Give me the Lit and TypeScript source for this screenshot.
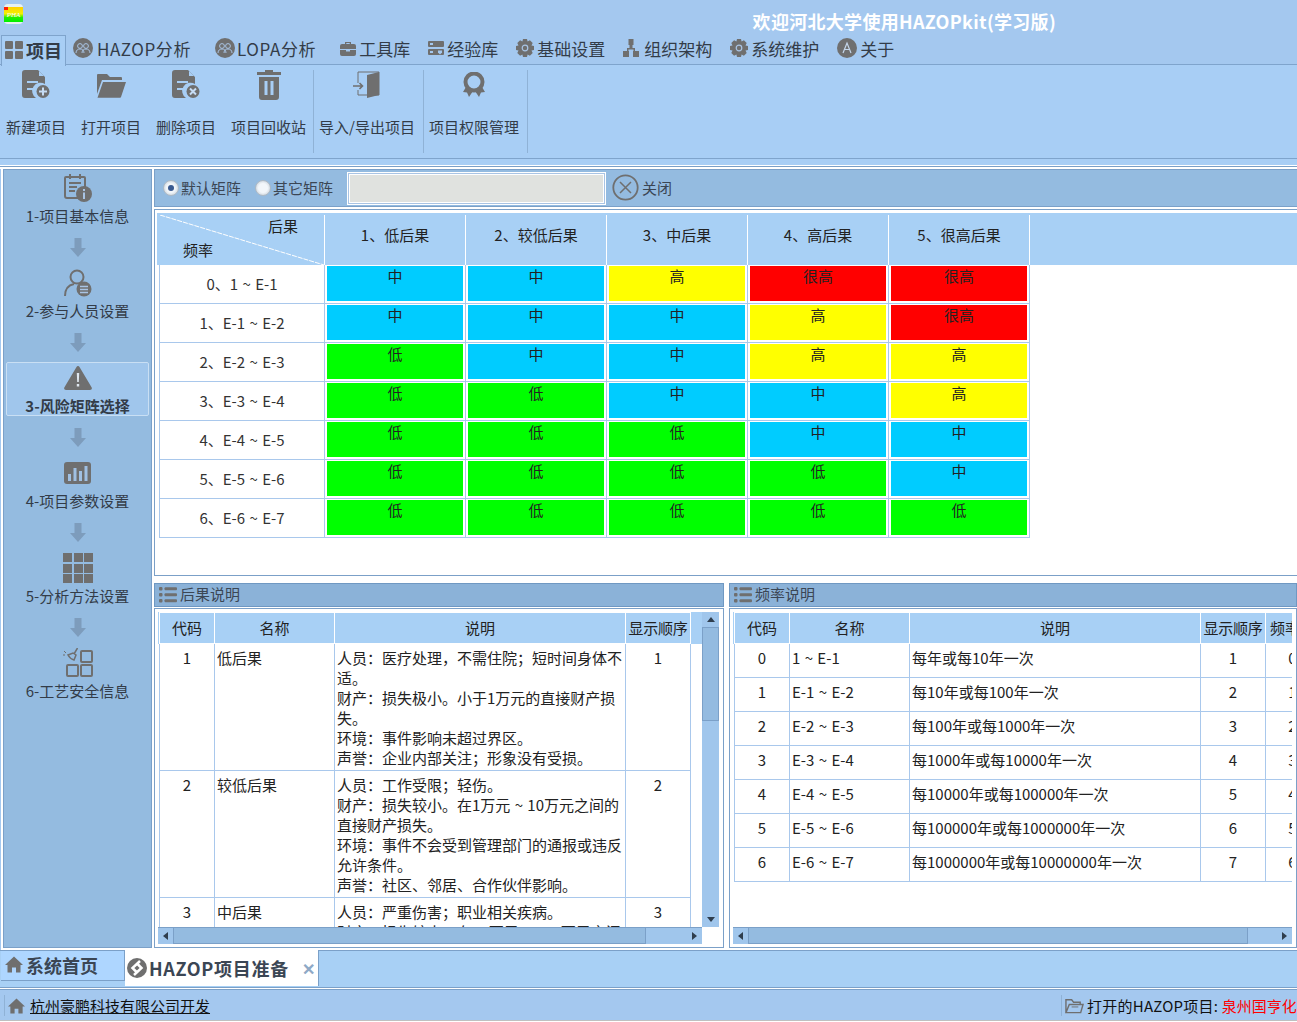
import { LitElement, html, css } from "lit";
import { customElement } from "lit/decorators.js";

const G = "#6f6f6f";
const icons: Record<string, any> = {
  grid: html`<svg width="20" height="20" viewBox="0 0 20 20"><g fill="${G}"><rect x="1" y="1" width="8" height="8" rx="1"/><rect x="11" y="1" width="8" height="8" rx="1"/><rect x="1" y="11" width="8" height="8" rx="1"/><rect x="11" y="11" width="8" height="8" rx="1"/></g></svg>`,
  people: html`<svg width="20" height="20" viewBox="0 0 20 20"><circle cx="10" cy="10" r="10" fill="${G}"/><g fill="none" stroke="#a9c4e4" stroke-width="1"><circle cx="7" cy="8" r="2.4"/><circle cx="13" cy="8" r="2.4"/><path d="M3 15c0-3 2-4 4-4s4 1 4 4M9 15c0-3 2-4 4-4s4 1 4 4"/></g></svg>`,
  case: html`<svg width="16" height="15" viewBox="0 0 16 15"><path fill="${G}" d="M5 1h6v2h3a2 2 0 0 1 2 2v3H0V5a2 2 0 0 1 2-2h3zm1.300 1v1h3.400V2zM0 9h6v1.500h4V9h6v4a2 2 0 0 1-2 2H2a2 2 0 0 1-2-2z"/></svg>`,
  server: html`<svg width="16" height="16" viewBox="0 0 16 16"><g fill="${G}"><rect y="1" width="16" height="6" rx="1"/><rect y="9" width="16" height="6" rx="1"/></g><g fill="#a4c8ef"><rect x="2" y="3" width="3" height="2"/><rect x="2" y="11" width="3" height="2"/></g><path fill="#a4c8ef" d="M10 10.500h4v2l-2 2-2-2z"/></svg>`,
  gear: html`<svg width="18" height="18" viewBox="0 0 18 18"><path fill="${G}" d="M7 0h4l.6 2.500 2.300-1.200 2.800 2.800-1.200 2.300L18 7v4l-2.500.6 1.200 2.300-2.800 2.800-2.300-1.200L11 18H7l-.6-2.500-2.300 1.200-2.800-2.800 1.200-2.300L0 11V7l2.500-.6-1.200-2.300 2.800-2.800 2.300 1.200z"/><circle cx="9" cy="9" r="2.800" fill="none" stroke="#a9c4e4" stroke-width="1.200"/></svg>`,
  org: html`<svg width="16" height="18" viewBox="0 0 16 18" class="org"><path fill="${G}" d="M5.500 0h5v6h-1v3h2.500v3H16v6h-6v-6h.5v-1.500h-5V12H6v6H0v-6h4V9h2.500V6h-1z"/></svg>`,
  about: html`<svg width="20" height="20" viewBox="0 0 20 20"><circle cx="10" cy="10" r="10" fill="${G}"/><path d="M6 15l4-10 4 10M7.500 11.500h5" fill="none" stroke="#c4d6ea" stroke-width="1.200"/></svg>`,
  docAdd: html`<svg width="28" height="30" viewBox="0 0 28 30"><path fill="${G}" d="M3 0h13l7 7v7a8 8 0 0 0-9 14H3a3 3 0 0 1-3-3V3a3 3 0 0 1 3-3z"/><path fill="#a8cef5" d="M17 1l5 5h-5zM5 11h11v2H5zM5 18h8v2H5z"/><circle cx="21" cy="21.500" r="6.500" fill="${G}"/><path d="M21 17.500v8M17 21.500h8" stroke="#c6dcf4" stroke-width="2"/></svg>`,
  docDel: html`<svg width="28" height="30" viewBox="0 0 28 30"><path fill="${G}" d="M3 0h13l7 7v7a8 8 0 0 0-9 14H3a3 3 0 0 1-3-3V3a3 3 0 0 1 3-3z"/><path fill="#a8cef5" d="M17 1l5 5h-5zM5 11h11v2H5zM5 18h8v2H5z"/><circle cx="21" cy="21.500" r="6.500" fill="${G}"/><path d="M18 18.500l6 6M24 18.500l-6 6" stroke="#c6dcf4" stroke-width="2"/></svg>`,
  folder: html`<svg width="30" height="26" viewBox="0 0 30 26"><path fill="${G}" d="M1 22V3a1 1 0 0 1 1-1h9l3 3h11a1 1 0 0 1 1 1v2H6z"/><path fill="${G}" d="M7 10h23l-5 15a1 1 0 0 1-1 .8H1.500z"/></svg>`,
  trash: html`<svg width="24" height="30" viewBox="0 0 24 30"><path fill="${G}" d="M8 0h8v2h8v3H0V2h8zM2 7h20v20a3 3 0 0 1-3 3H5a3 3 0 0 1-3-3z"/><path fill="#a8cef5" d="M7.500 11h3v14h-3zM13.500 11h3v14h-3z"/></svg>`,
  door: html`<svg width="28" height="28" viewBox="0 0 28 28"><path fill="none" stroke="${G}" d="M5 12V1h21v23h-10M5 19v5h11"/><path fill="${G}" d="M14 4l12-3v23l-12 3z"/><path d="M0 15h9M6.500 12l3 3-3 3" fill="none" stroke="${G}" stroke-width="1.600"/></svg>`,
  ribbon: html`<svg width="24" height="26" viewBox="0 0 24 26"><path fill="${G}" d="M4 15l-3 5 4 .5 2 4.500 4-6h2l4 6 2-4.500 4-.5-3-5z"/><circle cx="12" cy="10" r="8.500" fill="#a8cef5" stroke="${G}" stroke-width="4"/></svg>`,
  calInfo: html`<svg width="28" height="28" viewBox="0 0 28 28"><path fill="none" stroke="${G}" stroke-width="2" d="M15 24H3a2 2 0 0 1-2-2V4a1 1 0 0 1 1-1h18a1 1 0 0 1 1 1v9"/><path stroke="${G}" stroke-width="2" d="M6 0v5M16 0v5M5 9h12M5 13h8M5 17h6"/><circle cx="20" cy="20" r="8" fill="${G}"/><path stroke="#a9c4e4" stroke-width="2" d="M20 18.500V25M20 15v2"/></svg>`,
  person: html`<svg width="28" height="28" viewBox="0 0 28 28"><g fill="none" stroke="${G}" stroke-width="2"><circle cx="13" cy="8" r="6.500"/><path d="M1 27c0-7 4-11 9-12"/></g><circle cx="20" cy="20" r="7.500" fill="${G}"/><path stroke="#a9c4e4" stroke-width="1.300" d="M16 17.500h8M16 20.500h8M16 23.500h8"/></svg>`,
  warn: html`<svg width="28" height="24" viewBox="0 0 28 24"><path fill="${G}" d="M14 0q1 0 1.500 1L27.700 21.500Q28.500 24 26 24H2Q-.5 24 .3 21.500L12.500 1Q13 0 14 0z"/><path fill="#dfe7ef" d="M12.800 7h2.400l-.4 9h-1.600zM12.800 18h2.400v2.500h-2.400z"/></svg>`,
  chart: html`<svg width="28" height="22" viewBox="0 0 28 22"><rect width="27" height="22" rx="3" fill="${G}"/><g fill="#a0c0e2"><rect x="4" y="12" width="3" height="7"/><rect x="9.500" y="6" width="3" height="13"/><rect x="15" y="9" width="3" height="10"/><rect x="20.500" y="4" width="3" height="15"/></g></svg>`,
  nine: html`<svg width="30" height="30" viewBox="0 0 30 30"><g fill="${G}"><rect width="9" height="9"/><rect x="11" width="9" height="9"/><rect x="21" width="9" height="9"/><rect y="11" width="9" height="9"/><rect x="11" y="11" width="9" height="9"/><rect x="21" y="11" width="9" height="9"/><rect y="21" width="9" height="9"/><rect x="11" y="21" width="9" height="9"/><rect x="21" y="21" width="9" height="9"/></g></svg>`,
  broom: html`<svg width="30" height="30" viewBox="0 0 30 30"><g fill="none" stroke="${G}" stroke-width="2"><rect x="18" y="3" width="11" height="11" rx="1"/><rect x="4" y="17" width="11" height="11" rx="1"/><rect x="18" y="17" width="11" height="11" rx="1"/></g><path fill="none" stroke="${G}" stroke-width="1.500" d="M14.500 0l-3.500 6M5 7c1 2 3 4 6 5l2-5-3-2z"/><path stroke="${G}" d="M1 3l2 2M0 7h2"/></svg>`,
  list: html`<svg width="18" height="16" viewBox="0 0 18 16"><g fill="${G}"><rect width="3.500" height="3.500" rx="1"/><rect y="6" width="3.500" height="3.500" rx="1"/><rect y="12" width="3.500" height="3.500" rx="1"/><rect x="5.500" y=".3" width="12.500" height="3" rx="1"/><rect x="5.500" y="6.300" width="12.500" height="3" rx="1"/><rect x="5.500" y="12.300" width="12.500" height="3" rx="1"/></g></svg>`,
  home: html`<svg width="18" height="17" viewBox="0 0 18 16"><path fill="${G}" d="M9 0l9 8.500h-2.500V16h-4.500v-5H7v5H2.500V8.500H0z"/></svg>`,
  closeC: html`<svg width="27" height="27" viewBox="0 0 27 27"><circle cx="13.500" cy="13.500" r="12.200" fill="none" stroke="${G}" stroke-width="1.800"/><path d="M8 8l11 11M19 8L8 19" stroke="${G}" stroke-width="1.500"/></svg>`,
  hazop: html`<svg width="20" height="20" viewBox="0 0 20 20"><circle cx="10" cy="10" r="10" fill="${G}"/><path fill="none" stroke="#fff" stroke-width="2.500" d="M13 3L5.500 10l4 4M7 17l7.500-7-4-4"/></svg>`,
  folderO: html`<svg width="19" height="16" viewBox="0 0 20 16"><path fill="none" stroke="${G}" stroke-width="1.500" d="M1 15V1.500h6l2 2.500h7v2M1 15h15.500L19 6.500H4.500z"/><path stroke="${G}" d="M7 9h7"/></svg>`,
  arrow: html`<svg width="16" height="20" viewBox="0 0 16 20"><path fill="#7d9cbc" d="M4.500 0h7v10H16l-8 9-8-9h4.500z"/></svg>`,
  logo: html`<svg width="19" height="20" viewBox="0 0 19 20"><defs><linearGradient id="lg" x1="0" y1="0" x2="0" y2="1"><stop offset="0" stop-color="#ffd000"/><stop offset=".45" stop-color="#f4f000"/><stop offset=".7" stop-color="#22ee00"/><stop offset="1" stop-color="#00ee00"/></linearGradient></defs><rect width="19" height="20" rx="4" fill="#e6f0f0"/><rect y="3" width="19" height="15" fill="url(#lg)"/><rect y="3" width="4" height="3" fill="#ff2000"/><text x="9.500" y="13" font-size="7" font-style="italic" text-anchor="middle" fill="#fff" font-family="Liberation Serif, serif">PHA</text></svg>`,
};

const menu = [
  ["people", "HAZOP分析", "wide"],
  ["people", "LOPA分析", "wide"],
  ["case", "工具库", ""],
  ["server", "经验库", ""],
  ["gear", "基础设置", ""],
  ["org", "组织架构", ""],
  ["gear", "系统维护", ""],
  ["about", "关于", ""],
];

const ribbon = [
  [["docAdd", "新建项目"], ["folder", "打开项目"], ["docDel", "删除项目"], ["trash", "项目回收站"]],
  [["door", "导入/导出项目"]],
  [["ribbon", "项目权限管理"]],
];

const steps = [
  ["calInfo", "1-项目基本信息"],
  ["person", "2-参与人员设置"],
  ["warn", "3-风险矩阵选择"],
  ["chart", "4-项目参数设置"],
  ["nine", "5-分析方法设置"],
  ["broom", "6-工艺安全信息"],
];

const conseq = ["1、低后果", "2、较低后果", "3、中后果", "4、高后果", "5、很高后果"];
const freqs = ["1 ~ E-1", "E-1 ~ E-2", "E-2 ~ E-3", "E-3 ~ E-4", "E-4 ~ E-5", "E-5 ~ E-6", "E-6 ~ E-7"];
const L = ["低", "g"], M = ["中", "b"], H = ["高", "y"], V = ["很高", "r"];
const matrix = [
  [M, M, H, V, V],
  [M, M, M, H, V],
  [L, M, M, H, H],
  [L, L, M, M, H],
  [L, L, L, M, M],
  [L, L, L, L, M],
  [L, L, L, L, L],
];

const conseqRows = [
  ["1", "低后果", ["人员：医疗处理，不需住院；短时间身体不适。", "财产：损失极小。小于1万元的直接财产损失。", "环境：事件影响未超过界区。", "声誉：企业内部关注；形象没有受损。"], "1"],
  ["2", "较低后果", ["人员：工作受限；轻伤。", "财产：损失较小。在1万元 ~ 10万元之间的直接财产损失。", "环境：事件不会受到管理部门的通报或违反允许条件。", "声誉：社区、邻居、合作伙伴影响。"], "2"],
  ["3", "中后果", ["人员：严重伤害；职业相关疾病。", "财产：损失较大。在10万元 ~ 100万元之间的直接财产损失。"], "3"],
];

const freqDesc = ["每年或每10年一次", "每10年或每100年一次", "每100年或每1000年一次", "每1000年或每10000年一次", "每10000年或每100000年一次", "每100000年或每1000000年一次", "每1000000年或每10000000年一次"];

@customElement("app-root")
export class AppRoot extends LitElement {
  static styles = css`
    :host { display: block; width: 1297px; height: 1022px; overflow: hidden; background: #fff; font-family: "Noto Sans CJK SC", "Noto Sans", sans-serif; font-size: 15px; color: #222; }
    * { box-sizing: border-box; }
    svg { display: block; flex: none; }
    .top { height: 65px; background: #a4c8ef; border-bottom: 1px solid #7fa4cc; }
    .title { height: 34px; display: flex; justify-content: space-between; padding: 4px 241px 0 4px; }
    .title b { font-size: 18px; color: #fff; line-height: 34px; font-weight: 700; letter-spacing: .3px; }
    .menu { display: flex; height: 30px; align-items: center; font-size: 17px; color: #333c48; }
    .tab0 { width: 65px; height: 31px; margin: 0 7px 0 1px; padding: 0 0 1px 2px; display: flex; align-items: center; gap: 2px; border: 1px solid #7fa4cc; border-bottom: 0; background: #a8cef5; position: relative; top: 1px; font-size: 18px; font-weight: 700; }
    .mi { display: flex; align-items: center; gap: 3px; margin-right: 18px; white-space: nowrap; padding-bottom: 2px; }
    .mi .org { margin-right: 2px; }
    .mi.wide { margin-right: 24px; letter-spacing: .6px; gap: 4px; }
    .mi.wide + .mi.wide { gap: 2px; }
    .ribbon { height: 94px; background: #a8cef5; border-bottom: 1px solid #7fa4cc; display: flex; padding: 5px 0 0 0; }
    .rg { display: flex; gap: 15px; padding: 0 7px 0 6px; border-right: 1px solid #8fb2d6; height: 83px; margin-right: -1px; }
    .rg + .rg { padding-right: 8px; }
    .rb { display: flex; flex-direction: column; align-items: center; white-space: nowrap; color: #333c48; }
    .rb .ic { height: 32px; margin-top: -1px; display: flex; align-items: center; justify-content: center; }
    .rb span { margin-top: 14px; line-height: 24px; }
    .rule { height: 10px; background: linear-gradient(#a8cef5 0 6px, #fff 6px 7px, #7ba0c8 7px 8px, #fff 8px 10px); }
    .main { height: 781px; display: flex; padding: 0 0 0 2px; gap: 2px; background: #fff; border-left: 1px solid #a4c8ef; }
    .side { width: 149px; height: 779px; background: #94bbe0; border: 1px solid #7ba0c8; padding-top: 2px; display: flex; flex-direction: column; align-items: center; color: #333c48; }
    .step { width: 143px; height: 54px; flex: none; display: flex; flex-direction: column; align-items: center; border-radius: 2px; border: 1px solid transparent; white-space: nowrap; }
    .step.on { background: #a0c6ec; border-color: #c9dff4; font-weight: 700; }
    .step .ic { height: 33px; flex: none; display: flex; align-items: center; justify-content: center; padding-bottom: 3px; }
    .step span { line-height: 20px; flex: none; }
    .arrow { height: 41px; flex: none; display: flex; align-items: center; justify-content: center; padding-top: 2px; }
    .content { flex: 1; min-width: 0; display: flex; flex-direction: column; }
    .bar { height: 38px; background: #94bbe0; border: 1px solid #7ba0c8; border-right: 0; display: flex; align-items: center; padding-left: 8px; color: #3b4654; }
    .radio { display: flex; align-items: center; gap: 2px; margin-right: 14px; padding-bottom: 1px; }
    .dot { width: 16px; height: 16px; border-radius: 50%; background: radial-gradient(circle, #f2f6fa 0 45%, #b8c2cc 100%); border: 1px solid #aeb9c4; display: flex; align-items: center; justify-content: center; }
    .dot.on::after { content: ""; width: 6px; height: 6px; border-radius: 50%; background: #3a5a90; }
    .inp { width: 259px; height: 33px; margin: 0 6px 0 0; background: #e0e2df; border: 3px solid #fff; outline: 1px solid #a9c4e4; outline-offset: -2px; }
    .bar .cl { display: flex; align-items: center; gap: 3px; padding-bottom: 1px; }
    .mp { height: 367px; margin-top: 2px; border: 1px solid #7ba0c8; border-right: 0; background: #fff; padding: 3px 0 0 2px; }
    .mhead { background: #a8d0f5; padding: 2px 0 0 3px; height: 52px; }
    .mr { display: grid; grid-template-columns: 165px repeat(5, 141px); width: 870px; }
    .mhead .mr { height: 50px; }
    .hc { border-right: 1px solid #fff; display: flex; align-items: center; justify-content: center; color: #222; padding-bottom: 11px; }
    .corner { position: relative; display: block; border-right: 1px solid #fff; }
    .corner svg { position: absolute; left: 0; top: 0; }
    .corner .a { position: absolute; left: 108px; top: 0; }
    .corner .b { position: absolute; left: 23px; top: 24px; }
    .rows { padding-left: 3px; }
    .mr.row { height: 39px; border-bottom: 1px solid #a9c8ec; border-left: 1px solid #a9c8ec; margin-left: -1px; width: 871px; }
    .rh { display: flex; align-items: center; justify-content: center; border-right: 1px solid #a9c8ec; color: #333; word-spacing: 1px; padding-bottom: 2px; }
    .c { border-right: 1px solid #a9c8ec; padding: 1px 2px 2px; }
    .c div { height: 35px; text-align: center; line-height: 20px; color: #222; }
    .c .b { background: #00ccff; } .c .g { background: #00ff00; } .c .y { background: #ffff00; } .c .r { background: #ff0000; }
    .lower { flex: 1; display: flex; gap: 5px; margin-top: 7px; }
    .pane { display: flex; flex-direction: column; }
    .pane.l { width: 570px; } .pane.r { flex: 1; min-width: 0; }
    .pt { height: 24px; background: #8bb2d8; border: 1px solid #6f98c2; display: flex; align-items: center; gap: 3px; padding: 0 0 3px 4px; color: #3b4654; flex: none; }
    .pt svg { margin-top: 2px; }
    .pb { height: 340px; margin-top: 1px; border: 1px solid #7ba0c8; background: #fff; padding: 3px; display: grid; }
    .pb.l { grid-template-columns: 544px 17px; grid-template-rows: 315px 17px; }
    .pb.r { grid-template-columns: 559px; grid-template-rows: 315px 17px; }
    .clip { overflow: hidden; padding-left: 1px; background: linear-gradient(#a8d0f5 0 32px, #fff 32px); }
    .tbl { display: grid; width: max-content; }
    .pb.l .tbl { grid-template-columns: 56px 120px 291px 65px; }
    .pb.r .tbl { grid-template-columns: 56px 120px 291px 65px 54px; }
    .th { height: 32px; display: flex; align-items: center; justify-content: center; background: #a8d0f5; border: 1px solid #fff; border-width: 1px 1px 1px 0; padding-bottom: 2px; white-space: nowrap; }
    .th.first { border-left: 1px solid #fff; }
    .th.tight { letter-spacing: -.3px; }
    .td { padding: 4px 2px 0 2px; line-height: 20px; border-right: 1px solid #a9c8ec; border-bottom: 1px solid #a9c8ec; word-spacing: 1px; }
    .td.first { border-left: 1px solid #a9c8ec; }
    .td.ctr { text-align: center; }
    .pb.l .td { height: 127px; }
    .pb.r .td { height: 34px; white-space: nowrap; }
    .pb.l .td.d { padding-right: 0; }
    .vs { background: #a0c6ec; display: flex; flex-direction: column; }
    .vs .btn { height: 15px; display: flex; align-items: center; justify-content: center; }
    .vs .th2 { height: 94px; background: #94bbe0; border: 1px solid #7ba0c8; }
    .vs .sp { flex: 1; }
    .hs { background: #a0c6ec; display: flex; border-top: 1px solid #7ba0c8; }
    .hs .btn { width: 15px; display: flex; align-items: center; justify-content: center; flex: none; }
    .hs .th2 { background: #94bbe0; border: 1px solid #7ba0c8; border-top: 0; }
    .pb.l .hs .th2 { width: 473px; } .pb.r .hs .th2 { width: 500px; }
    .hs .sp { flex: 1; }
    .tri { width: 0; height: 0; border: 4px solid transparent; }
    .tri.u { border-bottom: 5px solid #2f3e4e; border-top: 0; }
    .tri.d { border-top: 5px solid #2f3e4e; border-bottom: 0; }
    .tri.l { border-right: 5px solid #2f3e4e; border-left: 0; }
    .tri.r { border-left: 5px solid #2f3e4e; border-right: 0; }
    .tabs { height: 38px; background: #a8d0f5; border-top: 1px solid #7ba0c8; border-bottom: 1px solid #7ba0c8; display: flex; padding-left: 1px; font-size: 18px; font-weight: 700; color: #3b4654; }
    .t1 { width: 124px; height: 30px; background: #aed6ff; border-bottom: 1px solid #7ba0c8; border-right: 1px solid #7ba0c8; display: flex; align-items: center; gap: 3px; padding: 0 0 2px 4px; }
    .t2 { width: 194px; height: 36px; background: #fff; display: flex; align-items: center; gap: 2px; padding: 0 0 0 2px; border-right: 1px solid #7ba0c8; margin-top: -1px; letter-spacing: .7px; }
    .t2 i { font-style: normal; color: #8fa9c6; margin-left: 11px; font-size: 16px; }
    .status { height: 32px; margin-top: 1px; background: #a4c8ef; border-top: 1px solid #7ba0c8; border-bottom: 1px solid #c0c0c0; padding-top: 1px; display: flex; align-items: center; justify-content: space-between; white-space: nowrap; color: #111; }
    .s1 { display: flex; align-items: center; gap: 5px; margin-left: 4px; border-left: 1px solid #8fb2d6; padding-left: 3px; }
    .s1 svg { width: 17px; height: 16px; }
    .s2 { width: 236px; display: flex; align-items: center; gap: 3px; overflow: hidden; border-left: 1px solid #8fb2d6; padding-left: 3px; }
    .s2 span { letter-spacing: .25px; }
    .s2 em { font-style: normal; color: #ff0000; letter-spacing: 0; }
  `;

  private table(cols: string[], body: any) {
    return html`<div class="tbl">
      ${cols.map((c, i) => html`<div class="th ${i === 0 ? "first" : ""} ${c === "显示顺序" ? "tight" : ""}">${c}</div>`)}
      ${body}
    </div>`;
  }

  render() {
    return html`
      <div class="top">
        <div class="title">${icons.logo}<b>欢迎河北大学使用HAZOPkit(学习版)</b></div>
        <div class="menu">
          <div class="tab0">${icons.grid}项目</div>
          ${menu.map(([i, t, w]) => html`<div class="mi ${w}">${icons[i]}<span>${t}</span></div>`)}
        </div>
      </div>
      <div class="ribbon">
        ${ribbon.map((g) => html`<div class="rg">${g.map(([i, t]) => html`<div class="rb"><div class="ic">${icons[i]}</div><span>${t}</span></div>`)}</div>`)}
      </div>
      <div class="rule"></div>
      <div class="main">
        <div class="side">
          ${steps.map(([i, t], n) => html`
            <div class="step ${n === 2 ? "on" : ""}"><div class="ic">${icons[i]}</div><span>${t}</span></div>
            ${n < 5 ? html`<div class="arrow">${icons.arrow}</div>` : ""}
          `)}
        </div>
        <div class="content">
          <div class="bar">
            <div class="radio"><div class="dot on"></div>默认矩阵</div>
            <div class="radio"><div class="dot"></div>其它矩阵</div>
            <div class="inp"></div>
            <div class="cl">${icons.closeC}关闭</div>
          </div>
          <div class="mp">
            <div class="mhead">
              <div class="mr">
                <div class="corner">
                  <svg width="164" height="50" viewBox="0 0 164 50"><path d="M0 0L164 50" stroke="#fff" stroke-dasharray="5 1"/></svg>
                  <span class="a">后果</span><span class="b">频率</span>
                </div>
                ${conseq.map((c) => html`<div class="hc">${c}</div>`)}
              </div>
            </div>
            <div class="rows">
              ${matrix.map((r, i) => html`<div class="mr row">
                <div class="rh">${i}、${freqs[i]}</div>
                ${r.map(([t, k]) => html`<div class="c"><div class="${k}">${t}</div></div>`)}
              </div>`)}
            </div>
          </div>
          <div class="lower">
            <div class="pane l">
              <div class="pt">${icons.list}后果说明</div>
              <div class="pb l">
                <div class="clip">
                  ${this.table(["代码", "名称", "说明", "显示顺序"], conseqRows.map(([a, b, c, d]) => html`
                    <div class="td ctr first">${a}</div>
                    <div class="td">${b}</div>
                    <div class="td d">${(c as string[]).map((l) => html`<div>${l}</div>`)}</div>
                    <div class="td ctr">${d}</div>
                  `))}
                </div>
                <div class="vs"><div class="btn"><div class="tri u"></div></div><div class="th2"></div><div class="sp"></div><div class="btn"><div class="tri d"></div></div></div>
                <div class="hs"><div class="btn"><div class="tri l"></div></div><div class="th2"></div><div class="sp"></div><div class="btn"><div class="tri r"></div></div></div>
              </div>
            </div>
            <div class="pane r">
              <div class="pt">${icons.list}频率说明</div>
              <div class="pb r">
                <div class="clip">
                  ${this.table(["代码", "名称", "说明", "显示顺序", "频率值"], freqDesc.map((d, i) => html`
                    <div class="td ctr first">${i}</div>
                    <div class="td">${freqs[i]}</div>
                    <div class="td">${d}</div>
                    <div class="td ctr">${i + 1}</div>
                    <div class="td ctr">${i}</div>
                  `))}
                </div>
                <div class="hs"><div class="btn"><div class="tri l"></div></div><div class="th2"></div><div class="sp"></div><div class="btn"><div class="tri r"></div></div></div>
              </div>
            </div>
          </div>
        </div>
      </div>
      <div class="tabs">
        <div class="t1">${icons.home}系统首页</div>
        <div class="t2">${icons.hazop}HAZOP项目准备<i>✕</i></div>
      </div>
      <div class="status">
        <div class="s1">${icons.home}<u>杭州豪鹏科技有限公司开发</u></div>
        <div class="s2">${icons.folderO}<span>打开的HAZOP项目: <em>泉州国亨化学有限公司</em></span></div>
      </div>
    `;
  }
}
